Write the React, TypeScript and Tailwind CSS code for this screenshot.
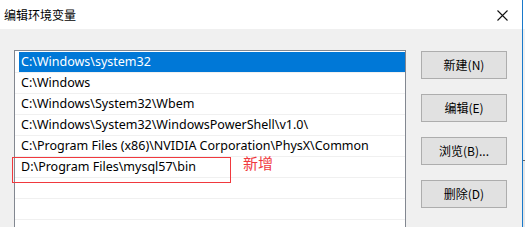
import React from "react";

const rows = [
  "C:\\Windows\\system32",
  "C:\\Windows",
  "C:\\Windows\\System32\\Wbem",
  "C:\\Windows\\System32\\WindowsPowerShell\\v1.0\\",
  "C:\\Program Files (x86)\\NVIDIA Corporation\\PhysX\\Common",
  "D:\\Program Files\\mysql57\\bin",
  "",
  "",
  "",
];

const buttons = ["新建(N)", "编辑(E)", "浏览(B)...", "删除(D)"];

export default function App() {
  return (
    <div
      className="w-[525px] h-[227px] overflow-hidden flex bg-white"
      style={{ fontFamily: '"Noto Sans", "Noto Sans CJK SC", sans-serif' }}
    >
      <div className="w-[522px] flex flex-col shrink-0">
        <div className="h-[29px] bg-white flex items-center justify-between pl-[4px] pr-[14px] shrink-0">
          <span className="text-[12px] text-black leading-none" style={{ fontFamily: '"Noto Sans CJK SC", sans-serif' }}>
            编辑环境变量
          </span>
          <svg width="11" height="11" viewBox="0 0 11 11" className="mt-[1px]">
            <path d="M0.5 0.5 L10.5 10.5 M10.5 0.5 L0.5 10.5" stroke="#111" strokeWidth="1.1" />
          </svg>
        </div>
        <div className="flex-1 bg-[#f0f0f0] relative flex pt-[21px] pl-[14px]">
          <div className="w-[392px] h-[200px] border border-[#828790] bg-white pt-[1px] shrink-0">
            {rows.map((r, i) => (
              <div key={i} className="h-[21px] border-b border-[#f0f0f0] flex">
                <div
                  className={
                    "flex-1 ml-[4px] h-[20px] flex items-center pl-[2px] text-[12.5px] whitespace-nowrap " +
                    (i === 0 ? "bg-[#0078d7] text-white" : "text-black")
                  }
                >
                  {r}
                </div>
              </div>
            ))}
          </div>
          <div className="flex flex-col gap-[15px] ml-[15px] mt-[1px]">
            {buttons.map((b) => (
              <div
                key={b}
                className="w-[86px] h-[28px] bg-[#e1e1e1] border border-[#adadad] flex items-center justify-center text-[12px] text-black"
                style={{ fontFamily: '"Noto Sans CJK SC", sans-serif' }}
              >
                {b}
              </div>
            ))}
          </div>
          <div className="absolute left-[12px] top-[128px] w-[219px] h-[26px] border border-[#f0393e]" />
          <div
            className="absolute left-[243px] top-[125px] text-[15px] leading-[17px] text-[#f0393e]"
            style={{ fontFamily: '"Noto Sans CJK SC", sans-serif' }}
          >
            新增
          </div>
        </div>
      </div>
      <div className="w-[1px] bg-[#1979ca] shrink-0" />
      <div className="flex-1 flex flex-col">
        <div className="h-[29px] bg-white" />
        <div className="h-[131px] bg-[#f0f0f0]" />
        <div className="h-[1px] bg-[#646464]" />
        <div className="flex-1 bg-[#e6e6e6]" />
      </div>
    </div>
  );
}
